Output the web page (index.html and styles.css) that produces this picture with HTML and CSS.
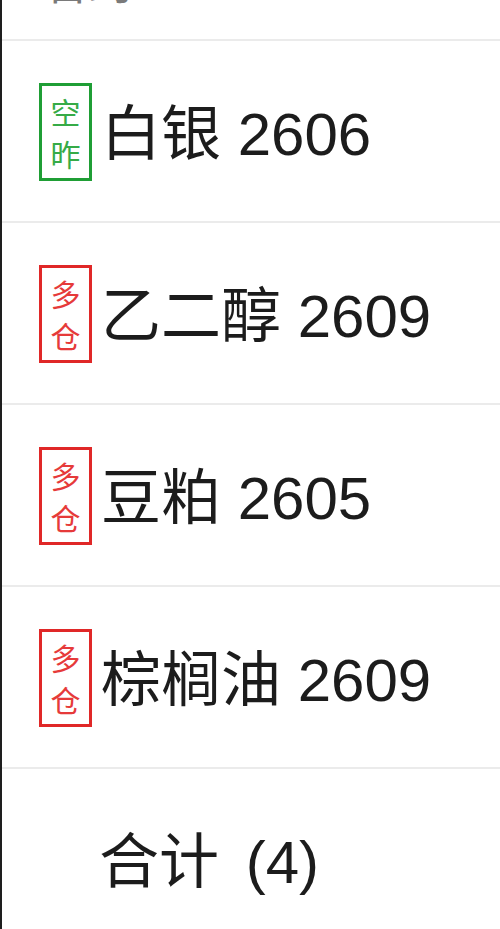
FILE: index.html
```html
<!DOCTYPE html>
<html lang="zh-CN">
<head>
<meta charset="utf-8">
<title>持仓列表</title>
<link rel="stylesheet" href="styles.css">
</head>
<body>
<div class="list">
  <div class="head"><span class="head-text">合约</span></div>
  <div class="row">
    <div class="badge badge-green"><span>空</span><span>昨</span></div>
    <div class="name">白银 2606</div>
  </div>
  <div class="row">
    <div class="badge badge-red"><span>多</span><span>仓</span></div>
    <div class="name">乙二醇 2609</div>
  </div>
  <div class="row">
    <div class="badge badge-red"><span>多</span><span>仓</span></div>
    <div class="name">豆粕 2605</div>
  </div>
  <div class="row">
    <div class="badge badge-red"><span>多</span><span>仓</span></div>
    <div class="name">棕榈油 2609</div>
  </div>
  <div class="row row-total">
    <div class="name">合计 (4)</div>
  </div>
</div>
</body>
</html>
```
FILE: styles.css
```css
html, body {
  margin: 0;
  padding: 0;
  background: #ffffff;
}
body {
  font-family: "Liberation Sans", "Noto Sans CJK SC", sans-serif;
  overflow: hidden;
  height: 929px;
}
.list {
  border-left: 2px solid #1e1e1e;
  min-height: 929px;
}
.head {
  height: 39px;
  border-bottom: 2px solid #ebebeb;
  display: flex;
  align-items: flex-end;
  overflow: hidden;
  padding-left: 43px;
}
.head-text {
  font-family: "Noto Sans CJK SC", sans-serif;
  font-size: 44px;
  line-height: 44px;
  color: #7a7a7a;
  margin-bottom: 36px;
}
.row {
  height: 180px;
  border-bottom: 2px solid #ebebeb;
  display: flex;
  align-items: center;
  padding-left: 37px;
  gap: 9px;
}
.row-total {
  padding-left: 97px;
  border-bottom: none;
}
.badge {
  box-sizing: border-box;
  width: 53px;
  height: 98px;
  border: 3px solid;
  display: flex;
  flex-direction: column;
  align-items: center;
  justify-content: center;
  font-family: "Noto Sans CJK SC", sans-serif;
  font-size: 30px;
  line-height: 42px;
  margin-top: 2px;
}
.badge-green {
  border-color: #1f9e35;
  color: #36ab47;
}
.badge-red {
  border-color: #e02828;
  color: #e63a3a;
}
.name {
  font-size: 60px;
  line-height: 80px;
  color: #1c1c1c;
  white-space: nowrap;
  margin-top: 8px;
}
.row-total .name {
  word-spacing: 10px;
}
```
